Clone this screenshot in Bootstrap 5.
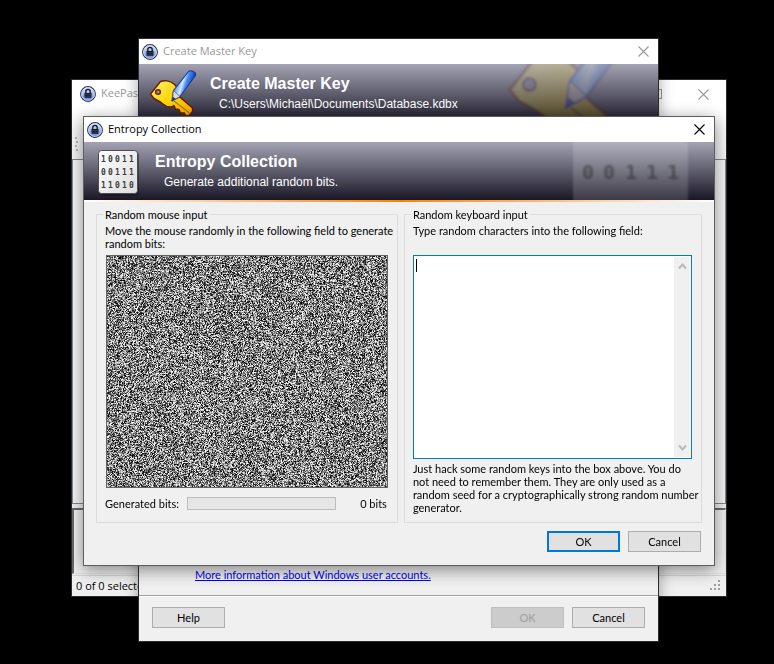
<!DOCTYPE html>
<html lang="en">
<head>
<meta charset="utf-8">
<meta name="viewport" content="width=device-width, initial-scale=1">
<title>Entropy Collection</title>
<link href="https://cdn.jsdelivr.net/npm/bootstrap@5.3.0/dist/css/bootstrap.min.css" rel="stylesheet">
<style>
body { background: #000; color: #000; font: 11px/13px Lato, "Liberation Sans", Arial, sans-serif; min-height: 100vh; overflow: hidden; }
.desktop { min-height: 664px; }
.win { position: absolute; border: 1px solid #2b2e31; background: #f0f0f0; }
.win-main { left: 71px; top: 79px; width: 656px; height: 518px; }
.win-key { left: 138px; top: 38px; width: 521px; height: 604px; box-shadow: 0 3px 14px rgba(0,0,0,.35); }
.win-entropy { left: 83px; top: 116px; width: 632px; border-color: #5c5d60; box-shadow: 0 4px 16px rgba(0,0,0,.45); }
.titlebar { height: 25px; background: #fff; padding: 0 4px 0 3px; font: 11px/16px "Open Sans", "Noto Sans", sans-serif; }
.titlebar.inactive { color: #999; }
.titlebar h1, .titlebar h2 { font: inherit; margin: 0 0 2px 5px; }
.win-main .titlebar { height: 28px; padding: 0 12px 0 8px; }
.sysbtn { width: 22px; height: 22px; border: 0; background: none; padding: 0; color: inherit; display: flex; align-items: center; justify-content: center; }
.banner { height: 58px; color: #fff; background: linear-gradient(#a4a3b3, #191726); padding: 8px 13px; overflow: hidden; position: relative; font-family: "Liberation Sans", Arial, sans-serif; }
.banner-text { margin-left: 16px; padding-top: 2px; }
.banner-title { font-size: 16px; line-height: 20px; font-weight: 700; }
.banner-sub { font-size: 12px; line-height: 16px; padding-left: 9px; margin-top: 2px; }
.ghost { position: absolute; top: 0; right: 0; }
.win-key .banner { height: 60px; padding: 4px 10px; }
.win-key .banner-text { margin-left: 13px; padding-top: 6px; }
.accent { height: 2px; background: linear-gradient(90deg, #fff, #ff8000 50%, #fff); }
.entropy-body { padding: 6px 12px 13px; }
.groups { gap: 6px; }
.group { border: 1px solid #dcdcdc; padding: 0 8px 8px; margin: 0; min-width: 0; }
.group-mouse { flex: 302 1 0; }
.group-keys { flex: 298 1 0; }
.group legend { float: none; width: auto; font-size: 11px; line-height: 13px; padding: 0 2px; margin: 0 0 3px -2px; }
.note { min-height: 26px; margin: 0 0 5px; }
.note, .hint { white-space: nowrap; }
.noise { display: block; width: 100%; height: 233px; border: 1px solid #646464; image-rendering: pixelated; }
.noise-frame { padding: 0 1px; margin-bottom: 9px; }
.bitbar { height: 13px; border: 1px solid #bcbcbc; background: #e6e6e6; border-radius: 0; margin: 0 13px 0 10px; }
.bits-label { width: 72px; white-space: nowrap; }
.bitvalue { width: 40px; padding-right: 2px; }
.keybox { position: relative; height: 204px; border: 1px solid #0078d7; background: #fff; margin: 0 1px 3px 0; padding: 1px; }
.keybox textarea { border: 0; outline: 0; resize: none; background: none; padding: 2px; overflow: hidden; }
.caret { position: absolute; left: 2px; top: 3px; width: 1px; height: 13px; background: #000; }
.scroller { width: 16px; background: #f0f0f0; padding: 5px 0; }
.btn-win { width: 73px; height: 21px; border: 1px solid #adadad; border-radius: 0; background: #e1e1e1; color: #000; font-size: 11px; line-height: 13px; padding: 0; }
.btn-win.default { border: 2px solid #0078d7; }
.btn-win:disabled { background: #ccc; border-color: #bfbfbf; color: #a0a0a0; opacity: 1; }
.footer-row { gap: 8px; padding-right: 1px; }
.key-link { padding: 0 56px; margin-bottom: 14px; }
.key-link a { color: #00e; }
.key-footer { border-top: 1px solid #a0a0a0; box-shadow: inset 0 1px #fff; padding: 11px 13px 13px; gap: 8px; }
.toolbar { height: 51px; background: linear-gradient(#fff, #f4f4f4); padding: 29px 3px 0; }
.pane-top { height: 345px; border: 1px solid #828790; background: #f6f6f6; }
.pane-log { height: 66px; margin-top: 4px; border: 2px solid #696969; border-width: 2px 1px 1px 2px; border-right-color: #e3e3e3; border-bottom-color: #e3e3e3; }
.statusbar { border-top: 1px solid #d7d7d7; font: 11px/20px "Open Sans", "Noto Sans", sans-serif; padding: 0 4px; }
</style>
<script src="https://cdn.jsdelivr.net/npm/bootstrap@5.3.0/dist/js/bootstrap.bundle.min.js"></script>
</head>
<body>
<svg width="0" height="0" class="position-absolute" aria-hidden="true">
  <defs>
    <linearGradient id="blueDisc" x1="0" y1="0" x2="0" y2="1"><stop offset="0" stop-color="#dfe8fb"/><stop offset="1" stop-color="#5a7fe0"/></linearGradient>
    <linearGradient id="gold" x1="0" y1="0" x2="1" y2="1"><stop offset="0" stop-color="#fff27a"/><stop offset=".5" stop-color="#ffd400"/><stop offset="1" stop-color="#f5a800"/></linearGradient>
    <linearGradient id="pen" x1="0" y1=".3" x2="1" y2=".7"><stop offset=".2" stop-color="#5b9cf8"/><stop offset=".42" stop-color="#d5e8ff"/><stop offset=".55" stop-color="#4a8cf4"/><stop offset=".8" stop-color="#1440b0"/></linearGradient>
    <linearGradient id="sheet" x1="0" y1="0" x2="1" y2="1"><stop offset="0" stop-color="#fff"/><stop offset="1" stop-color="#dcdcdc"/></linearGradient>
    <filter id="soft"><feGaussianBlur stdDeviation="1"/></filter>
    <symbol id="lock" viewBox="0 0 16 16">
      <circle cx="8" cy="8" r="7.400" fill="url(#blueDisc)" stroke="#30384c" stroke-width="1.100"/>
      <circle cx="8" cy="8" r="6.400" fill="none" stroke="#dbe4f8" stroke-width=".8"/>
      <path d="M5.800 7V5.600a2.200 2.200 0 0 1 4.400 0V7" fill="none" stroke="#15171f" stroke-width="1.300"/>
      <rect x="4.500" y="7" width="7" height="4.700" rx=".5" fill="#15171f"/>
      <path d="M5.200 8.600h5.600M5.200 10.200h5.600" stroke="#4c5670" stroke-width=".6"/>
    </symbol>
    <symbol id="keypen" viewBox="0 0 48 48">
      <path d="M11.500 13.500 C15 12 21 12.500 25 16 C29 19.500 30.500 23 29 27.500 L43.500 40 L43.500 43.500 L40 47.500 L36.500 47.500 L35.500 45 L31.500 45 L30 41.500 L26.500 41 L25 37.500 C22 39.500 17.500 39 14 36 C11 33.500 8 32 5 30.500 L1.500 26 Z" fill="url(#gold)" stroke="#6b1a00" stroke-width="1.400" stroke-linejoin="round"/>
      <path d="M25 33 40.500 45" stroke="#b86f00" stroke-width="1.200"/>
      <circle cx="9" cy="24" r="2.400" fill="#8c8897" stroke="#6b1a00" stroke-width="1.300"/>
      <path d="M39.500 3.500 C42 1.500 47.500 4 46.500 7.500 L31 28.500 L23 33 L24.500 22.500 Z" fill="url(#pen)" stroke="#1538a0" stroke-width="1.100" stroke-linejoin="round"/>
      <path d="M24.500 22.500 31 28.500 23 33Z" fill="#ecd9b4" stroke="#1538a0" stroke-width=".6"/>
      <path d="m23.700 28.500-.9 4.800 4-2.200z" fill="#123a9c"/>
    </symbol>
    <symbol id="cross" viewBox="0 0 11 11"><path d="M.5.5l10 10M10.500.5l-10 10" stroke="currentColor" stroke-width="1.100" fill="none"/></symbol>
  </defs>
</svg>

<main class="desktop position-relative">
  <section class="win win-main d-flex flex-column" aria-label="KeePass">
    <div class="titlebar inactive d-flex align-items-center">
      <svg width="16" height="16"><use href="#lock"/></svg>
      <h2>KeePass</h2>
      <button class="sysbtn ms-auto" aria-label="Maximize"><svg width="10" height="10"><rect x=".5" y=".5" width="9" height="9" fill="none" stroke="currentColor"/></svg></button>
      <button class="sysbtn ms-4" aria-label="Close"><svg width="11" height="11"><use href="#cross"/></svg></button>
    </div>
    <div class="toolbar"><svg width="4" height="16" fill="#b5b5b5"><path d="M0 0h2v2H0zM1 4h2v2H1zM0 8h2v2H0zM1 12h2v2H1z"/></svg></div>
    <div class="pane-top"></div>
    <div class="pane-log"></div>
    <div class="statusbar d-flex justify-content-between align-items-end mt-auto">
      <span>0 of 0 selected</span>
      <svg width="12" height="12" class="mb-1" fill="#a0a0a0"><path d="M8 0h2v2H8zM4 4h2v2H4zM8 4h2v2H8zM0 8h2v2H0zM4 8h2v2H4zM8 8h2v2H8z"/></svg>
    </div>
  </section>

  <section class="win win-key d-flex flex-column" aria-label="Create Master Key">
    <div class="titlebar inactive d-flex align-items-center">
      <svg width="16" height="16"><use href="#lock"/></svg>
      <h2>Create Master Key</h2>
      <button class="sysbtn ms-auto" aria-label="Close"><svg width="11" height="11"><use href="#cross"/></svg></button>
    </div>
    <div class="banner d-flex">
      <svg width="48" height="48" class="flex-shrink-0"><use href="#keypen"/></svg>
      <div class="banner-text">
        <div class="banner-title">Create Master Key</div>
        <div class="banner-sub">C:\Users\Michaël\Documents\Database.kdbx</div>
      </div>
      <svg class="ghost" width="152" height="60" viewBox="0 0 152 60"><g opacity=".2" filter="url(#soft)"><use href="#keypen" x="0" y="-42" width="125" height="125"/></g></svg>
    </div>
    <div class="key-link mt-auto"><a href="#">More information about Windows user accounts.</a></div>
    <div class="key-footer d-flex">
      <button class="btn btn-win">Help</button>
      <button class="btn btn-win ms-auto" disabled>OK</button>
      <button class="btn btn-win">Cancel</button>
    </div>
  </section>

  <section class="win win-entropy" role="dialog" aria-label="Entropy Collection">
    <div class="titlebar d-flex align-items-center">
      <svg width="16" height="16"><use href="#lock"/></svg>
      <h1>Entropy Collection</h1>
      <button class="sysbtn ms-auto" aria-label="Close"><svg width="11" height="11"><use href="#cross"/></svg></button>
    </div>
    <div class="banner d-flex">
      <svg width="42" height="46" viewBox="0 0 42 46" class="flex-shrink-0" font-family="DejaVu Sans Mono, monospace" font-weight="700" font-size="8" fill="#3c3c3c">
        <rect x="2" y="2" width="40" height="44" rx="3" fill="#111" opacity=".45"/>
        <rect x="1.500" y=".5" width="39" height="43" rx="3" fill="url(#sheet)" stroke="#4c4c55"/>
        <text y="12" x="4 11 18 25 32">10011</text>
        <text y="25" x="4 11 18 25 32">00111</text>
        <text y="38" x="4 11 18 25 32">11010</text>
      </svg>
      <div class="banner-text">
        <div class="banner-title">Entropy Collection</div>
        <div class="banner-sub">Generate additional random bits.</div>
      </div>
      <svg class="ghost" width="142" height="58" viewBox="0 0 142 58" font-family="DejaVu Sans Mono, monospace" font-weight="700" font-size="20">
        <rect x="1" y="-8" width="115" height="74" fill="#fff" opacity=".15" filter="url(#soft)"/>
        <text y="37" x="10 31 53 74 95" fill="#111" opacity=".38" filter="url(#soft)">00111</text>
      </svg>
    </div>
    <div class="accent"></div>
    <form class="entropy-body" onsubmit="return false">
      <div class="groups d-flex">
        <fieldset class="group group-mouse">
          <legend>Random mouse input</legend>
          <p class="note">Move the mouse randomly in the following field to generate<br>random bits:</p>
          <div class="noise-frame"><canvas class="noise" id="noise" width="280" height="231"></canvas></div>
          <div class="d-flex align-items-center">
            <span class="bits-label" id="bitsLabel">Generated bits:</span>
            <div class="progress bitbar flex-grow-1" role="progressbar" aria-labelledby="bitsLabel" aria-valuenow="0" aria-valuemin="0" aria-valuemax="256"></div>
            <span class="bitvalue text-end">0 bits</span>
          </div>
        </fieldset>
        <fieldset class="group group-keys">
          <legend>Random keyboard input</legend>
          <label class="note d-block" for="keys">Type random characters into the following field:</label>
          <div class="keybox d-flex">
            <textarea id="keys" class="flex-grow-1"></textarea>
            <span class="caret"></span>
            <div class="scroller d-flex flex-column justify-content-between align-items-center">
              <svg width="9" height="8" fill="none" stroke="#b9b9b9" stroke-width="2"><path d="M1 6.500l3.500-4 3.500 4"/></svg>
              <svg width="9" height="8" fill="none" stroke="#b9b9b9" stroke-width="2"><path d="M1 1.500l3.500 4 3.500-4"/></svg>
            </div>
          </div>
          <p class="hint mb-0">Just hack some random keys into the box above. You do<br>not need to remember them. They are only used as a<br>random seed for a cryptographically strong random number<br>generator.</p>
        </fieldset>
      </div>
      <div class="footer-row d-flex justify-content-end mt-2">
        <button class="btn btn-win default" type="submit">OK</button>
        <button class="btn btn-win" type="button">Cancel</button>
      </div>
    </form>
  </section>
</main>
<script>
// Fill the mouse field with grey static from a small seeded generator.
(function () {
  const canvas = document.getElementById('noise');
  const ctx = canvas.getContext('2d');
  const image = ctx.createImageData(canvas.width, canvas.height);
  let seed = 20231;
  for (let i = 0; i < image.data.length; i += 4) {
    seed = (Math.imul(seed, 1664525) + 1013904223) >>> 0;
    const v = seed >>> 24;
    image.data[i] = image.data[i + 1] = image.data[i + 2] = v;
    image.data[i + 3] = 255;
  }
  ctx.putImageData(image, 0, 0);
})();
</script>
</body>
</html>
